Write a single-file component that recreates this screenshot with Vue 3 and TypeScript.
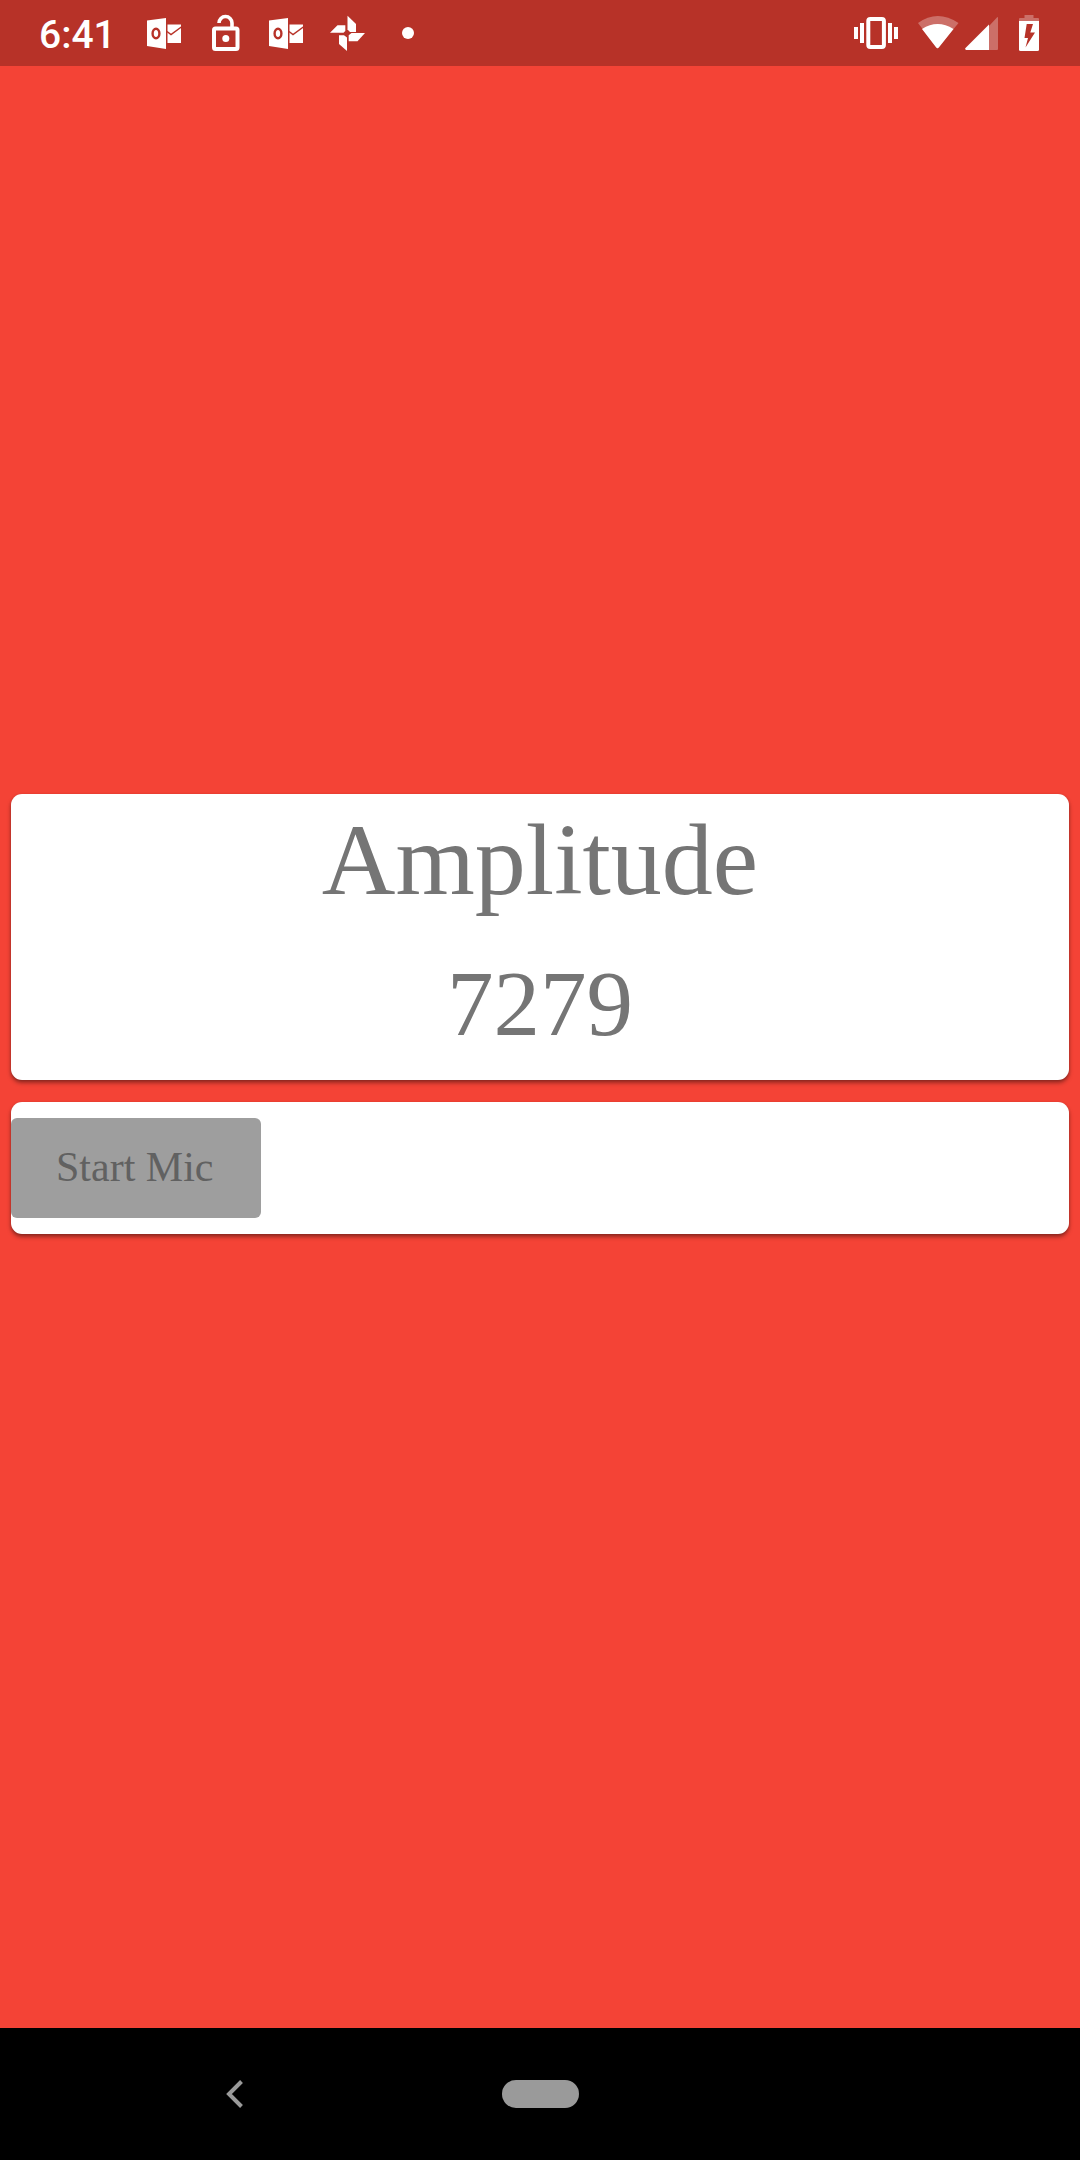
<script setup lang="ts">
import { ref } from 'vue'

const time = ref<string>('6:41')
const amplitude = ref<number>(7279)
const listening = ref<boolean>(true)

type Notice = 'outlook' | 'lock' | 'photos' | 'more'
const notices: Notice[] = ['outlook', 'lock', 'outlook', 'photos', 'more']
</script>

<template>
  <div class="screen">
    <header class="status">
      <span class="time">{{ time }}</span>
      <div class="notices">
        <svg v-for="(n, i) in notices" :key="i" class="notice" viewBox="0 0 61 66" aria-hidden="true">
          <g v-if="n === 'outlook'">
            <path d="M13 20.500 32 18v31l-19-3z" fill="#fff" />
            <ellipse cx="22" cy="33.500" rx="3.400" ry="4.700" fill="none" stroke="#b73228" stroke-width="2.400" />
            <path d="M33.500 24.500h13.500v18.500H33.500z" fill="#fff" />
            <path d="M33 31.500 37 34.500 48 26.500" fill="none" stroke="#b73228" stroke-width="1.500" />
          </g>
          <g v-else-if="n === 'lock'">
            <rect x="19" y="28.500" width="23.500" height="20.500" rx="1.500" fill="none" stroke="#fff" stroke-width="4" />
            <path d="M24 23a6.500 6.500 0 0 1 13 0v4" fill="none" stroke="#fff" stroke-width="3.600" />
            <circle cx="30.800" cy="38.600" r="3.500" fill="#fff" />
          </g>
          <g v-else-if="n === 'photos'" fill="#fff">
            <path d="M30.500 15.700 39 24v8H33l-2.500-2.500z" />
            <path d="M13 32.700 20.500 25.300h7.800V31L26.500 32.700z" />
            <path d="M22 35.300h5l3 2.200V51l-8-7z" />
            <path d="M48 33 40.500 41.300h-8.800v-6L34.500 33z" />
          </g>
          <circle v-else cx="30" cy="33" r="6" fill="#fff" />
        </svg>
      </div>
      <div class="system">
        <svg width="44" height="66" viewBox="0 0 44 66" aria-hidden="true">
          <rect x="14.300" y="19" width="15.600" height="28" rx="2" fill="none" stroke="#fff" stroke-width="4" />
          <path d="M0 27h4v12H0zM6 23h4v20H6zM34 23h4v20h-4zM40 27h4v12h-4z" fill="#fff" />
        </svg>
        <div class="signals">
          <svg width="42" height="66" viewBox="1 0 42 66" aria-hidden="true">
            <path d="M1 23Q20.500 9 41.500 23L20.500 48.500z" fill="#fff" fill-opacity=".3" />
            <path d="M5 29Q20.500 19 36.500 29L22 47.300q-1.500 2-3 0z" fill="#fff" />
          </svg>
          <svg width="34" height="66" viewBox="0 0 34 66" aria-hidden="true">
            <path d="M24 26 32 17.500q1-1 1 .5V49q0 1-1 1h-8z" fill="#fff" fill-opacity=".3" />
            <path d="M24 24.500V50H1q-1.500-1-.5-2z" fill="#fff" />
          </svg>
        </div>
        <svg width="20" height="66" viewBox="0 0 20 66" aria-hidden="true">
          <path d="M5.500 15h9v3H19q1 0 1 1v2H0v-2q0-1 1-1h4.500z" fill="#fff" fill-opacity=".3" />
          <path d="M0 21h20v28.500q0 1.500-1.500 1.500h-17Q0 51 0 49.500z" fill="#fff" />
          <path d="M7.700 24H14l-2.700 8.500H16L6.500 47.500 9 38H5.500z" fill="#b73228" />
        </svg>
      </div>
    </header>

    <main class="content">
      <section class="card reading">
        <div class="label">Amplitude</div>
        <div class="value">{{ amplitude }}</div>
      </section>
      <section class="card controls">
        <button class="mic" type="button" :disabled="listening">Start Mic</button>
      </section>
    </main>

    <nav class="navbar">
      <button class="back" type="button" aria-label="Back">
        <svg width="18" height="28" viewBox="0 0 18 28" aria-hidden="true">
          <path d="M15.500 1.500 3 14l12.500 12.500" fill="none" stroke="#9a9a9a" stroke-width="4" />
        </svg>
      </button>
      <button class="home" type="button" aria-label="Home"></button>
    </nav>
  </div>
</template>

<style>
body {
  background: #f44336;
}
</style>

<style scoped>
.screen {
  display: flex;
  flex-direction: column;
  min-height: 100vh;
  background: #f44336;
  font-family: "Liberation Serif", serif;
}

.status {
  display: flex;
  align-items: center;
  height: 66px;
  padding: 0 41px 0 39px;
  background: #b73228;
}

.time {
  width: 95px;
  padding-top: 4px;
  box-sizing: border-box;
  color: #fff;
  font: 500 39px/44px Roboto, sans-serif;
}

.notices {
  display: flex;
}

.notice {
  width: 61px;
  height: 66px;
}

.system {
  display: flex;
  gap: 20px;
  margin-left: auto;
}

.signals {
  display: flex;
  gap: 5px;
}

.content {
  display: flex;
  flex: 1;
  flex-direction: column;
  justify-content: center;
  gap: 22px;
  padding: 0 11px 66px;
}

.card {
  border-radius: 11px;
  background: #fff;
  box-shadow: 0 3px 4px rgba(0, 0, 0, 0.36), 0 1px 3px rgba(0, 0, 0, 0.16);
}

.reading {
  display: flex;
  flex-direction: column;
  gap: 12px;
  padding-bottom: 10px;
  color: #757575;
  line-height: 132px;
  text-align: center;
}

.label {
  font-size: 102px;
}

.value {
  font-size: 93px;
}

.controls {
  display: flex;
  padding: 16px 0;
}

.mic {
  height: 100px;
  padding: 0 48px 2px 45px;
  border: 0;
  border-radius: 6px;
  background: #9e9e9e;
  color: #616161;
  font: 42px/48px "Liberation Serif", serif;
}

.navbar {
  display: grid;
  grid-template-columns: 1fr 140px 1fr;
  place-items: center;
  height: 132px;
  background: #000;
}

.back {
  display: flex;
  padding: 12px;
  border: 0;
  background: none;
}

.home {
  width: 77px;
  height: 28px;
  padding: 0;
  border: 0;
  border-radius: 14px;
  background: #9a9a9a;
}
</style>
